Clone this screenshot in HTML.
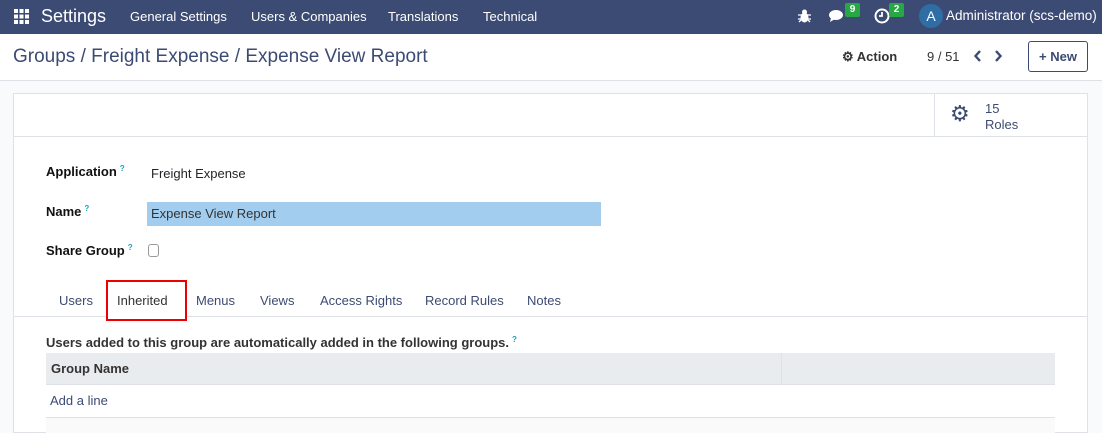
<!DOCTYPE html>
<html><head><style>
*{box-sizing:border-box;margin:0;padding:0}
body{width:1102px;height:432px;overflow:hidden;font-family:"Liberation Sans",sans-serif;font-size:13px;color:#212529;background:#f9fafb;position:relative}
div,span{white-space:nowrap}
.nav{position:absolute;left:0;top:0;width:1102px;height:34px;background:#3c4b73;color:#fff}
.nav span{position:absolute;top:9px;font-size:13px}
.cp{position:absolute;left:0;top:34px;width:1102px;height:47px;background:#fff;border-bottom:1px solid #dee2e6}
.sheet{position:absolute;left:13px;top:93px;width:1075px;height:340px;background:#fff;border:1px solid #dee2e6}
.a{position:absolute}
.lbl{font-weight:bold;font-size:13px;color:#111}
.q{color:#17a2b8;font-size:8px;vertical-align:top;margin-left:3px}
.tab{position:absolute;font-size:13px;color:#3c4b73}
</style></head><body>
<div class="nav">
<svg class="a" style="left:14px;top:9px" width="15" height="15" viewBox="0 0 15 15" fill="#fff"><rect x="0" y="0" width="4" height="4"/><rect x="5.5" y="0" width="4" height="4"/><rect x="11" y="0" width="4" height="4"/><rect x="0" y="5.5" width="4" height="4"/><rect x="5.5" y="5.5" width="4" height="4"/><rect x="11" y="5.5" width="4" height="4"/><rect x="0" y="11" width="4" height="4"/><rect x="5.5" y="11" width="4" height="4"/><rect x="11" y="11" width="4" height="4"/></svg>
<span style="left:41px;top:6px;font-size:18px">Settings</span>
<span style="left:130px">General Settings</span>
<span style="left:251px">Users &amp; Companies</span>
<span style="left:388px">Translations</span>
<span style="left:483px">Technical</span>
<svg class="a" style="left:798px;top:9px" width="13" height="14" viewBox="0 0 13 14" fill="#fff"><ellipse cx="6.5" cy="8.5" rx="4" ry="5"/><circle cx="6.5" cy="3" r="2.5"/><path d="M0 6h13M0 10h13M1 13l2-2M12 13l-2-2" stroke="#fff" stroke-width="1.3"/></svg>
<svg class="a" style="left:829px;top:9px" width="17" height="14" viewBox="0 0 17 14" fill="#fff"><ellipse cx="7" cy="6" rx="7" ry="5"/><path d="M2 9 L1 13 L6 10Z"/></svg>
<div class="a" style="left:845px;top:3px;width:15px;height:14px;background:#28a745;border-radius:2px;font-size:10px;text-align:center;line-height:14px;font-weight:bold">9</div>
<svg class="a" style="left:874px;top:8px" width="16" height="16" viewBox="0 0 16 16"><circle cx="8" cy="8" r="6.5" fill="none" stroke="#fff" stroke-width="2"/><path d="M8 4v4h-3" stroke="#fff" stroke-width="1.8" fill="none"/></svg>
<div class="a" style="left:889px;top:3px;width:15px;height:14px;background:#28a745;border-radius:2px;font-size:10px;text-align:center;line-height:14px;font-weight:bold">2</div>
<div class="a" style="left:919px;top:4px;width:24px;height:24px;border-radius:50%;background:#2f6ea5;text-align:center;line-height:24px;font-size:14px">A</div>
<span style="left:946px;top:8px;font-size:13.5px">Administrator (scs-demo)</span>
</div>
<div class="cp">
<div class="a" style="left:13px;top:12px;font-size:19px;color:#3c4b73">Groups / Freight Expense / Expense View Report</div>
<div class="a" style="left:842px;top:15px;font-weight:bold;color:#333">&#9881; Action</div>
<div class="a" style="left:927px;top:15px;color:#333">9 / 51</div>
<svg class="a" style="left:974px;top:16px" width="30" height="12" viewBox="0 0 30 12" fill="none" stroke="#3c4b73" stroke-width="2.4"><path d="M6 1L1.5 6L6 11M22 1L26.5 6L22 11"/></svg>
<div class="a" style="left:1028px;top:7px;width:60px;height:31px;border:1px solid #3c4b73;border-radius:3px;color:#3c4b73;font-weight:bold;text-align:center;line-height:29px">+ New</div>
</div>
<div class="sheet">
<div class="a" style="left:0;top:42px;width:1073px;border-top:1px solid #dee2e6"></div>
<div class="a" style="left:920px;top:0;height:42px;border-left:1px solid #dee2e6"></div>
<div class="a" style="left:936px;top:7px;font-size:22px;color:#3c4b73">&#9881;</div>
<div class="a" style="left:971px;top:7px;color:#3c4b73;line-height:16px">15<br>Roles</div>
</div>
<div class="a lbl" style="left:46px;top:164px">Application<span class="q">?</span></div>
<div class="a" style="left:151px;top:166px">Freight Expense</div>
<div class="a lbl" style="left:46px;top:204px">Name<span class="q">?</span></div>
<div class="a" style="left:147px;top:202px;width:454px;height:24px;background:#a3cdee;padding:4px 4px;color:#333">Expense View Report</div>
<div class="a lbl" style="left:46px;top:243px">Share Group<span class="q">?</span></div>
<div class="a" style="left:148px;top:244px;width:11px;height:13px;border:1px solid #999;border-radius:3px;background:#fff"></div>
<div class="a" style="left:14px;top:316px;width:1074px;border-top:1px solid #dee2e6"></div>
<div class="a" style="left:106px;top:280px;width:81px;height:41px;border:2px solid #e00;background:#fff"></div>
<div class="tab" style="left:59px;top:293px">Users</div>
<div class="tab" style="left:117px;top:293px;color:#333">Inherited</div>
<div class="tab" style="left:196px;top:293px">Menus</div>
<div class="tab" style="left:260px;top:293px">Views</div>
<div class="tab" style="left:320px;top:293px">Access Rights</div>
<div class="tab" style="left:425px;top:293px">Record Rules</div>
<div class="tab" style="left:527px;top:293px">Notes</div>
<div class="a lbl" style="left:46px;top:335px;color:#333">Users added to this group are automatically added in the following groups.<span class="q">?</span></div>
<div class="a" style="left:46px;top:353px;width:1009px;height:32px;background:#e9ecef;border-bottom:1px solid #dee2e6"></div>
<div class="a" style="left:781px;top:353px;height:32px;border-left:1px solid #dee2e6"></div>
<div class="a lbl" style="left:51px;top:361px;color:#333">Group Name</div>
<div class="a" style="left:50px;top:393px;color:#3c4b73">Add a line</div>
<div class="a" style="left:46px;top:417px;width:1009px;border-top:1px solid #dee2e6;height:16px;background:#fafafa"></div>
</body></html>
